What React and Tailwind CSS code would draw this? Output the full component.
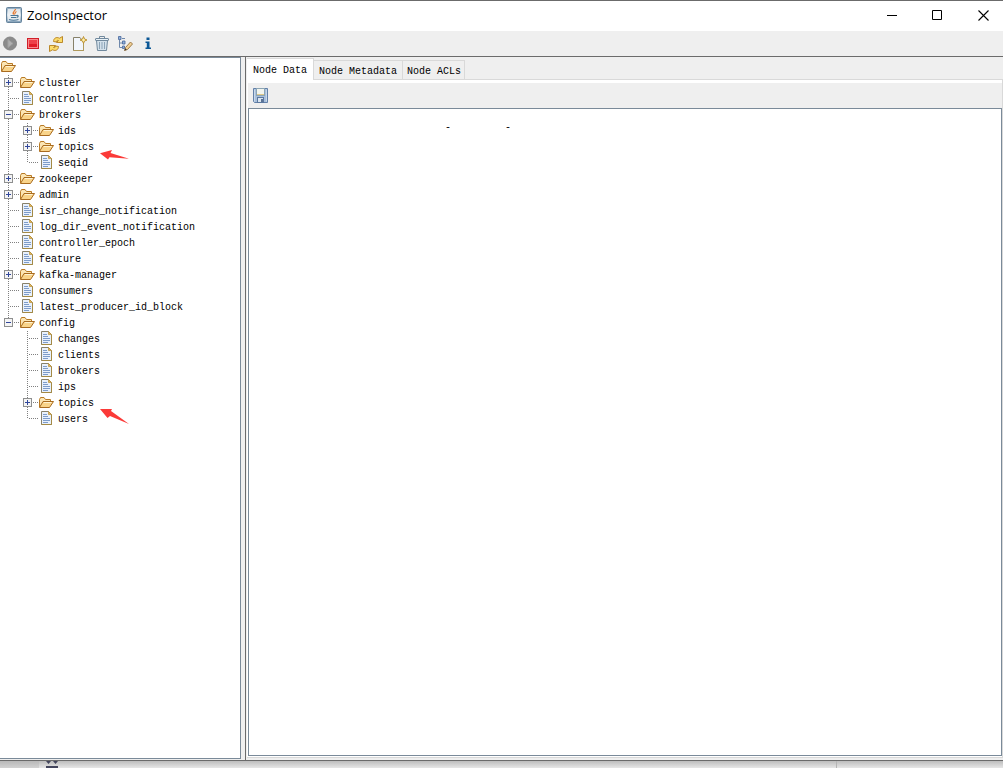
const ROOT = [
  { name: 'cluster', type: 'folder', toggle: 'plus' },
  { name: 'controller', type: 'file' },
  {
    name: 'brokers', type: 'folder', toggle: 'minus',
    children: [
      { name: 'ids', type: 'folder', toggle: 'plus' },
      { name: 'topics', type: 'folder', toggle: 'plus', arrow: 'flat' },
      { name: 'seqid', type: 'file' },
    ],
  },
  { name: 'zookeeper', type: 'folder', toggle: 'plus' },
  { name: 'admin', type: 'folder', toggle: 'plus' },
  { name: 'isr_change_notification', type: 'file' },
  { name: 'log_dir_event_notification', type: 'file' },
  { name: 'controller_epoch', type: 'file' },
  { name: 'feature', type: 'file' },
  { name: 'kafka-manager', type: 'folder', toggle: 'plus' },
  { name: 'consumers', type: 'file' },
  { name: 'latest_producer_id_block', type: 'file' },
  {
    name: 'config', type: 'folder', toggle: 'minus',
    children: [
      { name: 'changes', type: 'file' },
      { name: 'clients', type: 'file' },
      { name: 'brokers', type: 'file' },
      { name: 'ips', type: 'file' },
      { name: 'topics', type: 'folder', toggle: 'plus', arrow: 'steep' },
      { name: 'users', type: 'file' },
    ],
  },
]

const NODE_TEXT = ' '.repeat(32) + '-' + ' '.repeat(9) + '-'

function FolderIcon() {
  return (
    <svg width="17" height="16" viewBox="0 0 17 16" className="shrink-0">
      <path d="M1.5 12V4.5L2.5 2.5H6L7.5 4.5H12.5V7" fill="#fce6b4" stroke="#b87a24" strokeLinejoin="round" />
      <path d="M1.5 12.5L5 6.5H15.5L11.5 12.5Z" fill="#f9d48a" stroke="#a96b1f" strokeLinejoin="round" />
      <path d="M6 7.5H13.5" stroke="#fff3d2" />
    </svg>
  )
}

function FileIcon() {
  return (
    <svg width="17" height="16" viewBox="0 0 17 16" className="shrink-0">
      <path d="M3.5 .5H10.5L13.5 3.5V13.5H3.5Z" fill="#e9f1fc" stroke="#87816a" />
      <path d="M3.5 13.5H13.5V4" fill="none" stroke="#a48a45" />
      <path d="M10.5 .5V3.5H13.5Z" fill="#e3b95b" stroke="#b98f36" strokeWidth=".7" />
      <path d="M5 3.5H9M5 5.5H10M5 7.5H12M5 9.5H12M5 11.5H10" stroke="#7d9cca" />
    </svg>
  )
}

function Guide({ line, branch, half, toggle }) {
  return (
    <svg width="19" height="16" viewBox="0 0 19 16" shapeRendering="crispEdges" className="block">
      {line && <path d={half ? 'M8.5 0V8' : 'M8.5 0V16'} stroke="#808080" strokeDasharray="1 1" />}
      {branch && <path d="M10 7.5H19" stroke="#808080" strokeDasharray="1 1" />}
      {toggle && (
        <>
          <rect x="4.5" y="3.5" width="8" height="8" fill="#f4f4f4" stroke="#8e8f8f" />
          <path d="M6 7.5H11" stroke="#31479b" />
          {toggle === 'plus' && <path d="M8.5 5V10" stroke="#31479b" />}
        </>
      )}
    </svg>
  )
}

function Arrow({ kind }) {
  return (
    <svg width="30" height="19" viewBox="0 0 30 19" className="absolute left-full top-3 ml-[6px]">
      {kind === 'flat' ? (
        <path d="M0 3.3L12 0L10.5 3L29 8.7L9.5 7.3L8 9.5Z" fill="#fb3a38" />
      ) : (
        <path d="M0 3H12L11 5L29 18L10 10L7.5 12Z" fill="#fb3a38" />
      )}
    </svg>
  )
}

function TreeRow({ node, depth, last, parentLine }) {
  const guide = <Guide line branch half={last} toggle={node.toggle} />
  return (
    <li>
      <div className="flex h-4 items-center">
        {depth > 0 && <Guide line={parentLine} />}
        {node.toggle ? <button type="button" aria-label={'Toggle ' + node.name}>{guide}</button> : guide}
        {node.type === 'folder' ? <FolderIcon /> : <FileIcon />}
        <span className="relative ml-[3px] pt-[2px] leading-4">
          {node.name}
          {node.arrow && <Arrow kind={node.arrow} />}
        </span>
      </div>
      {node.children && (
        <ul>
          {node.children.map((child, i) => (
            <TreeRow
              key={child.name}
              node={child}
              depth={depth + 1}
              last={i === node.children.length - 1}
              parentLine={!last}
            />
          ))}
        </ul>
      )}
    </li>
  )
}

function JavaIcon() {
  return (
    <svg width="16" height="16" viewBox="0 0 16 16">
      <defs>
        <linearGradient id="java" x1="0" y1="0" x2="0" y2="1">
          <stop offset="0" stopColor="#8aa6bd" />
          <stop offset=".5" stopColor="#dfe8ee" />
          <stop offset="1" stopColor="#7f9db6" />
        </linearGradient>
      </defs>
      <rect x=".5" y=".5" width="15" height="15" rx="1" fill="url(#java)" stroke="#64829b" />
      <rect x="2" y="2" width="12" height="12" fill="#f4f6f7" opacity=".75" />
      <path d="M9.5 2C9.5 4 6 4.5 7.5 7.5M10.5 4.5C8.5 5.5 9.5 6 8.5 7.5" fill="none" stroke="#e8762c" strokeWidth="1.2" />
      <path d="M4.5 8.5H10.5M5 10.5H10M10.5 8.5C13 8 12.5 10 10.5 10.5M3 12.5C5 13.5 10 13.5 12.5 12.5" fill="none" stroke="#4a7696" strokeWidth="1.1" />
    </svg>
  )
}

const TOOLS = [
  {
    label: 'Connect',
    icon: (
      <>
        <circle cx="8" cy="7.5" r="6.5" fill="#8b8b8b" stroke="#858585" />
        <path d="M6 3.5L11 7.5L6 11.5Z" fill="#b0b0b0" stroke="#a0a0a0" />
      </>
    ),
  },
  {
    label: 'Disconnect',
    icon: (
      <>
        <rect x="2.5" y="2.5" width="11" height="10" fill="#ee4249" stroke="#d01f29" />
        <rect x="3.5" y="3.5" width="9" height="8" fill="none" stroke="#f9898c" />
        <path d="M4 8H12V11H4Z" fill="#e11d27" />
      </>
    ),
  },
  {
    label: 'Refresh',
    icon: (
      <g fill="#fbdc6c" stroke="#b57f1c" strokeWidth=".9" strokeLinejoin="round">
        <path d="M5.5 5.5C5.5 2.5 8 .5 11.5 2.2L14.5 .5V6.5H8.500L10.500 4.500C9.300 4 8.500 4.600 8.300 6Z" />
        <path d="M10.500 10.500C10.500 13.500 8 15.500 4.500 13.800L1.500 15.500V9.500H7.500L5.500 11.500C6.700 12 7.500 11.400 7.700 10Z" />
      </g>
    ),
  },
  {
    label: 'Add Node',
    icon: (
      <>
        <path d="M2.5 1.5H9L12.5 6V14.5H2.5Z" fill="#f2f6fc" stroke="#87816a" />
        <path d="M12.5 6V14.5H2.5" fill="none" stroke="#b09a5c" />
        <path d="M12.5 .5L13.5 3L16 4L13.5 5L12.5 7.5L11.5 5L9 4L11.5 3Z" fill="#fff1a8" stroke="#b98a28" strokeWidth=".9" />
      </>
    ),
  },
  {
    label: 'Delete Node',
    icon: (
      <>
        <path d="M2.5 4.5H13.5L12.5 14.5H3.5Z" fill="#d3e0ea" stroke="#71899d" />
        <path d="M5.5 6V13M8 6V13M10.5 6V13" stroke="#8ba3b7" />
        <rect x="1.5" y="2.5" width="13" height="2" rx=".5" fill="#e8f1f7" stroke="#71899d" />
        <path d="M5.5 2V.5H10.5V2" fill="none" stroke="#71899d" />
      </>
    ),
  },
  {
    label: 'Node Viewers',
    icon: (
      <>
        <path d="M2.5 4V11.5H5M2.5 7H6M5 2.5H8" fill="none" stroke="#6f88ab" />
        <path d="M1.5 .5H4V3.5H1.5ZM5.5 5H8V8H5.5ZM5.5 10H7.5V12.5H5.5Z" fill="#8fb0da" stroke="#46669a" strokeWidth=".8" />
        <path d="M7.5 14.5L8.5 11.5L13.5 6L15.5 8L10.5 13.5Z" fill="#f1cf94" stroke="#94703c" strokeWidth=".9" />
        <path d="M7.5 14.5L8.2 12.3L9.8 13.8Z" fill="#333333" />
      </>
    ),
  },
  {
    label: 'About',
    icon: (
      <path d="M6.5 1.5H9.5V4H6.5ZM5.5 5.5H9.5V11.5H11V13H5.5V11.5H6.8V7H5.5Z" fill="#0b5796" />
    ),
  },
]

function SaveIcon() {
  return (
    <svg width="16" height="16" viewBox="0 0 16 16">
      <path d="M.5 .5H14.5V14.5H1.5L.5 13.5Z" fill="#a9c0dc" stroke="#6280a8" />
      <path d="M1.5 1.5V13.5M13.5 1.5V13.5" stroke="#c9d9ea" />
      <rect x="3.5" y=".5" width="8" height="7" fill="#f2f5ef" stroke="#8ba4b4" />
      <path d="M4 6.5H11" stroke="#e2c987" />
      <rect x="4.5" y="9.5" width="6" height="5" fill="#dbe6f0" stroke="#5b78a0" />
      <path d="M8 11H10V14H8Z" fill="#5b7396" />
    </svg>
  )
}

export default function App() {
  return (
    <div className="flex h-screen flex-col overflow-hidden border-t border-[#6b6b6b] bg-[#efefef] font-['Liberation_Mono',monospace] text-[10px] text-black">
      <header className="flex h-[30px] shrink-0 items-center justify-between bg-white pb-[2px] pl-[6px] pr-[14px]">
        <div className="flex items-center gap-[5px]">
          <JavaIcon />
          <h1 className="font-['Open_Sans',sans-serif] text-[13px] leading-4">ZooInspector</h1>
        </div>
        <div className="flex items-center gap-[35px]">
          <button type="button" aria-label="Minimize">
            <svg width="11" height="11" viewBox="0 0 11 11"><path d="M1 5.5H11" stroke="#000" /></svg>
          </button>
          <button type="button" aria-label="Maximize">
            <svg width="11" height="11" viewBox="0 0 11 11"><path d="M.5 .5H9.5V9.5H.5Z" fill="none" stroke="#000" /></svg>
          </button>
          <button type="button" aria-label="Close">
            <svg width="11" height="11" viewBox="0 0 11 11"><path d="M.5 .5L10.5 10.5M10.5 .5L.5 10.5" stroke="#000" strokeWidth="1.1" /></svg>
          </button>
        </div>
      </header>

      <div className="flex h-[25px] shrink-0 items-center gap-[7px] pl-[2px]">
        {TOOLS.map((tool) => (
          <button key={tool.label} type="button" aria-label={tool.label}>
            <svg width="16" height="16" viewBox="0 0 16 16">{tool.icon}</svg>
          </button>
        ))}
      </div>

      <main className="flex min-h-0 flex-1 border-y border-[#6b6b6b]">
        <nav className="mb-px mr-1 w-[241px] shrink-0 overflow-hidden border-y border-r border-[#7a8a99] bg-white pt-px">
          <div className="flex h-4 items-center">
            <FolderIcon />
          </div>
          <ul>
            {ROOT.map((node, i) => (
              <TreeRow key={node.name} node={node} depth={0} last={i === ROOT.length - 1} />
            ))}
          </ul>
        </nav>

        <section className="flex min-w-0 flex-1 flex-col border-l border-[#6b6b6b] pl-px pt-px">
          <div className="flex h-[22px] shrink-0 items-end">
            <button type="button" className="h-[22px] border-r border-t border-[#d9d9d9] bg-white px-[6px] pt-[2px]">Node Data</button>
            <button type="button" className="h-5 border-y border-r border-[#d9d9d9] px-[5px] pt-[2px]">Node Metadata</button>
            <button type="button" className="h-5 border-y border-r border-[#d9d9d9] pl-1 pr-[3px] pt-[2px]">Node ACLs</button>
            <div className="h-px flex-1 bg-[#d9d9d9]" />
          </div>
          <div className="mb-[2px] flex min-h-0 flex-1 flex-col border-b border-r border-[#d9d9d9] bg-white pb-px pl-px pt-[3px]">
            <div className="flex h-[25px] shrink-0 items-center bg-[#efefef] pl-[5px]">
              <button type="button" aria-label="Save">
                <SaveIcon />
              </button>
            </div>
            <textarea
              aria-label="Node data"
              wrap="off"
              spellCheck="false"
              defaultValue={NODE_TEXT}
              className="block min-h-0 w-full flex-1 resize-none overflow-hidden border border-[#7a8a99] bg-white px-1 py-[11px] leading-4 outline-none"
            />
          </div>
        </section>
      </main>

      <footer className="flex h-[7px] shrink-0 bg-linear-to-b from-[#bdbdbd] to-[#e6e6e6]">
        <div className="w-[39px] bg-linear-to-b from-[#b8b8b8] to-[#d2d2d2]" />
        <svg width="26" height="7" viewBox="0 0 26 7">
          <path d="M7 0H12L9.5 3ZM14 0H19L16.5 3ZM7 5H19V7H7Z" fill="#43455c" />
        </svg>
        <div className="flex-1" />
        <div className="w-[167px] border-l border-[#b4b4b4]" />
      </footer>
    </div>
  )
}
